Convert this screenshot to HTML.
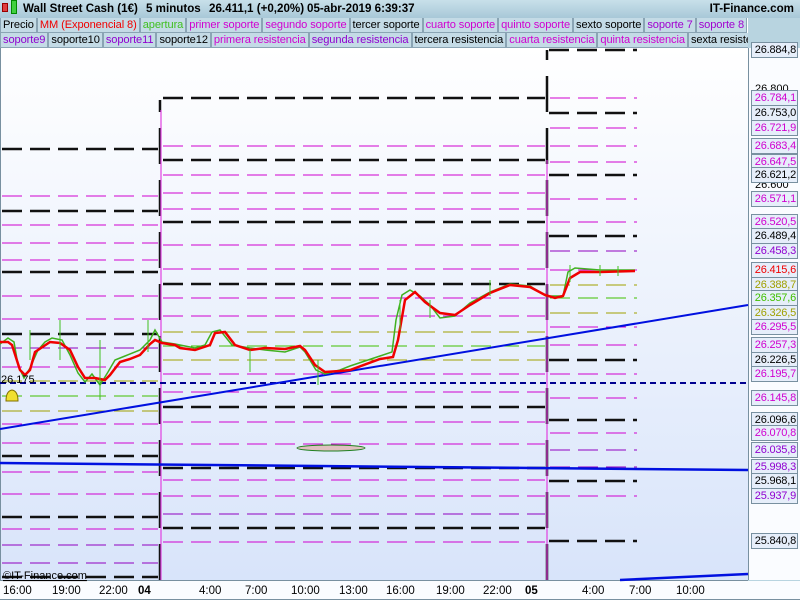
<!DOCTYPE html>
<html><head><meta charset="utf-8"><style>
*{margin:0;padding:0;box-sizing:border-box}
body{width:800px;height:600px;overflow:hidden;font-family:"Liberation Sans",sans-serif;background:#b8d4e0;position:relative}
.title{position:absolute;left:0;top:0;width:800px;height:18px;background:linear-gradient(#c8e0ea,#a8c8d8);font-weight:bold;font-size:11.6px;line-height:18px}
.title b{position:absolute;top:0;white-space:nowrap}
.row{position:absolute;left:0;height:15px;display:flex;font-size:11.1px;line-height:14px;overflow:hidden}
.row span{border:1px solid #8aa4b4;border-top:none;padding:0 2px;background:#c4dbe6;white-space:nowrap;letter-spacing:-0.1px}
.ax{position:absolute;left:751px;width:47px;height:16px;border:1px solid #7890a0;background:#e6eefa;font-size:11px;line-height:14px;text-align:right;padding-right:1px;letter-spacing:-0.2px;overflow:hidden}
.tl{position:absolute;top:585px;font-size:11.5px}
</style></head><body>
<div class="title"><span style="position:absolute;left:2px;top:3px;width:6px;height:9px;background:#e04040;border:1px solid #900"></span><span style="position:absolute;left:11px;top:0;width:6px;height:14px;background:#40d040;border:1px solid #080"></span><b style="left:23px">Wall Street Cash (1€)</b><b style="left:146px">5 minutos</b><b style="left:209px">26.411,1 (+0,20%)</b><b style="left:307px">05-abr-2019 6:39:37</b><b style="right:6px">IT-Finance.com</b></div>
<div style="position:absolute;left:693px;top:18px;width:55px;height:15px;background:#fff"></div>
<div class="row" style="top:18px;width:748px"><span>Precio</span><span style="color:#f00000">MM (Exponencial 8)</span><span style="color:#40c020">apertura</span><span style="color:#d000d0">primer soporte</span><span style="color:#d000d0">segundo soporte</span><span>tercer soporte</span><span style="color:#d000d0">cuarto soporte</span><span style="color:#d000d0">quinto soporte</span><span>sexto soporte</span><span style="color:#a000d0">soporte 7</span><span style="color:#a000d0">soporte 8</span></div>
<div class="row" style="top:33px;width:748px"><span style="color:#9000d0">soporte9</span><span>soporte10</span><span style="color:#9000d0">soporte11</span><span>soporte12</span><span style="color:#d000d0">primera resistencia</span><span style="color:#9000d0">segunda resistencia</span><span>tercera resistencia</span><span style="color:#d000d0">cuarta resistencia</span><span style="color:#d000d0">quinta resistencia</span><span style="flex:1">sexta resistencia</span></div>
<svg style="position:absolute;left:0;top:48px" width="800" height="552">
<defs><linearGradient id="g" x1="0" y1="0" x2="0" y2="1"><stop offset="0" stop-color="#ffffff"/><stop offset="1" stop-color="#d8e4fa"/></linearGradient></defs>
<rect x="0" y="0" width="748" height="532" fill="url(#g)"/>
<rect x="748" y="0" width="52" height="532" fill="#fafcff"/>
<line x1="748.5" y1="0" x2="748.5" y2="532" stroke="#7890a0"/>
<line x1="0.5" y1="0" x2="0.5" y2="552" stroke="#7890a0"/>
<line x1="0" y1="532.5" x2="748" y2="532.5" stroke="#7890a0"/>
<rect x="0" y="533" width="800" height="19" fill="#fafcff"/>
<line x1="0" y1="551.5" x2="800" y2="551.5" stroke="#7890a0"/>
<g transform="translate(0,-48)">
<g stroke-dasharray="20 8" fill="none">
<g stroke="#111" stroke-width="2.5"><path d="M2 149H158M2 211H158M2 272H158M2 334H158M2 456H158M2 517H158M2 577H158"/></g>
<g stroke="#d000d0" stroke-width="1"><path d="M2 196H158M2 225H158M2 243H158M2 260H158M2 296H158M2 319H158M2 367H158M2 424H158M2 443H158M2 472H158M2 494H158M2 529H158"/></g>
<g stroke="#9000c0"><path d="M2 348H158M2 545H158M2 563H158"/></g>
<g stroke="#a0a000"><path d="M2 381H158M2 411H158"/></g>
<g stroke="#40c000"><path d="M2 396H158"/></g>
<g stroke="#111" stroke-width="2.5"><path d="M163 98H545M163 160H545M163 222H545M163 284H545M163 407H545M163 468H545M163 528H545"/></g>
<g stroke="#d000d0"><path d="M163 146H545M163 175H545M163 193H545M163 209H545M163 245H545M163 269H545M163 298H545M163 316H545M163 374H545M163 392H545M163 422H545M163 444H545M163 480H545M163 496H545M163 542H545"/></g>
<g stroke="#9000c0"><path d="M163 514H545"/></g>
<g stroke="#a0a000"><path d="M163 332H545M163 360H545"/></g>
<g stroke="#40c000"><path d="M163 346H545"/></g>
<g stroke="#111" stroke-width="2.5"><path d="M549 50H637M549 113H637M549 175H637M549 236H637M549 360H637M549 420H637M549 481H637M549 541H637"/></g>
<g stroke="#d000d0"><path d="M550 98H637M550 128H637M550 146H637M550 162H637M550 199H637M550 222H637M550 270H637M550 327H637M550 345H637M550 374H637M550 398H637M550 433H637M550 496H637"/></g>
<g stroke="#9000c0"><path d="M550 251H637M550 450H637M550 467H637"/></g>
<g stroke="#a0a000"><path d="M550 285H637M550 313H637"/></g>
<g stroke="#40c000"><path d="M550 298H637"/></g>
</g>
<g fill="none" stroke-width="2.5" stroke="#111"><path d="M160 580V100M547 580V50" stroke-dasharray="36 16"/></g>
<path d="M161 580V110M547 580V160" stroke="#e040e0" stroke-width="1.2"/>
<line x1="0" y1="383" x2="748" y2="383" stroke="#000090" stroke-width="2" stroke-dasharray="6 4"/>
<line x1="0" y1="429" x2="748" y2="305" stroke="#0010e0" stroke-width="2"/>
<line x1="0" y1="463" x2="748" y2="470" stroke="#0010e0" stroke-width="2.5"/>
<line x1="620" y1="580" x2="748" y2="574" stroke="#0010e0" stroke-width="2.5"/>
<ellipse cx="331" cy="448" rx="34" ry="3" fill="#e0c0c0" stroke="#208020"/>
<polyline fill="none" stroke="#40b020" stroke-width="1.5" points="0,344 8,338 14,342 18,365 24,378 30,368 38,350 45,342 52,338 62,340 70,355 78,373 85,382 92,374 100,385 108,372 115,360 125,356 140,350 150,340 155,330 162,342 175,344 185,346 195,348 205,345 212,332 220,330 232,345 250,348 265,350 285,352 300,347 305,352 316,370 325,374 340,370 350,366 380,356 392,352 396,320 402,295 410,290 420,296 430,305 440,318 455,316 470,303 490,292 510,284 530,286 546,296 556,296 563,296 568,272 575,268 600,270 635,270"/>
<polyline fill="none" stroke="#f00000" stroke-width="2.5" points="0,342 8,342 12,345 20,370 25,375 30,370 35,352 50,342 60,343 70,350 78,367 85,378 95,378 105,380 110,375 120,362 130,359 140,355 150,344 155,340 162,343 175,345 180,348 195,350 210,345 215,333 225,332 235,345 250,350 265,348 285,349 300,346 305,350 315,365 325,372 340,371 350,370 380,359 393,357 398,340 405,300 415,292 425,302 440,313 455,315 470,305 490,293 510,285 530,287 545,295 555,298 563,296 570,278 580,272 600,272 635,271"/>
<g stroke="#40c020" stroke-width="1"><path d="M30 330V360M60 320V360M100 340V400M148 320V352M250 350V372M318 360V385M400 300V330M430 300V318M490 280V296M570 265V282M600 265V276M618 266V276"/></g>
<text x="1" y="383" font-size="11" font-family="Liberation Sans">26.175</text>
<path d="M6 401 Q6 391 12 390 Q18 391 18 401 Z" fill="#f0e030" stroke="#807000"/>
<text x="3" y="579" font-size="11" font-family="Liberation Sans" text-decoration="underline">©IT-Finance.com</text>
<text x="755" y="92" font-size="11" font-family="Liberation Sans">26.800</text>
<text x="755" y="188" font-size="11" font-family="Liberation Sans">26.600</text>
</g>
</svg>
<div class="ax" style="top:42px">26.884,8</div>
<div class="ax" style="top:90px;color:#d000d0">26.784,1</div>
<div class="ax" style="top:105px">26.753,0</div>
<div class="ax" style="top:120px;color:#d000d0">26.721,9</div>
<div class="ax" style="top:138px;color:#d000d0">26.683,4</div>
<div class="ax" style="top:154px;color:#d000d0">26.647,5</div>
<div class="ax" style="top:167px">26.621,2</div>
<div class="ax" style="top:191px;color:#d000d0">26.571,1</div>
<div class="ax" style="top:214px;color:#d000d0">26.520,5</div>
<div class="ax" style="top:228px">26.489,4</div>
<div class="ax" style="top:243px;color:#9000d0">26.458,3</div>
<div class="ax" style="top:262px;color:#f00000">26.415,6</div>
<div class="ax" style="top:277px;color:#a0a000">26.388,7</div>
<div class="ax" style="top:290px;color:#40c000">26.357,6</div>
<div class="ax" style="top:305px;color:#a0a000">26.326,5</div>
<div class="ax" style="top:319px;color:#d000d0">26.295,5</div>
<div class="ax" style="top:337px;color:#d000d0">26.257,3</div>
<div class="ax" style="top:352px">26.226,5</div>
<div class="ax" style="top:366px;color:#d000d0">26.195,7</div>
<div class="ax" style="top:390px;color:#d000d0">26.145,8</div>
<div class="ax" style="top:412px">26.096,6</div>
<div class="ax" style="top:425px;color:#d000d0">26.070,8</div>
<div class="ax" style="top:442px;color:#9000d0">26.035,8</div>
<div class="ax" style="top:459px;color:#9000d0">25.998,3</div>
<div class="ax" style="top:473px">25.968,1</div>
<div class="ax" style="top:488px;color:#9000d0">25.937,9</div>
<div class="ax" style="top:533px">25.840,8</div>
<div class="tl" style="left:3px">16:00</div>
<div class="tl" style="left:52px">19:00</div>
<div class="tl" style="left:99px">22:00</div>
<div class="tl" style="left:138px;font-weight:bold">04</div>
<div class="tl" style="left:199px">4:00</div>
<div class="tl" style="left:245px">7:00</div>
<div class="tl" style="left:291px">10:00</div>
<div class="tl" style="left:339px">13:00</div>
<div class="tl" style="left:386px">16:00</div>
<div class="tl" style="left:436px">19:00</div>
<div class="tl" style="left:483px">22:00</div>
<div class="tl" style="left:525px;font-weight:bold">05</div>
<div class="tl" style="left:582px">4:00</div>
<div class="tl" style="left:629px">7:00</div>
<div class="tl" style="left:676px">10:00</div>
</body></html>
